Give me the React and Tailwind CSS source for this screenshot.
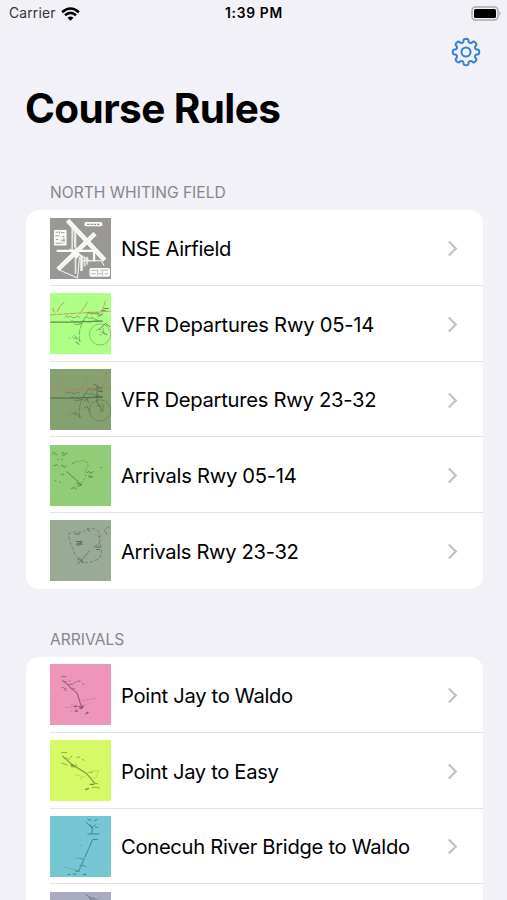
import React from "react";

const sections = [
    {
        title: "North Whiting Field",
        rows: [
            { label: "NSE Airfield", spacing: "tracking-[-0.35px]", art: AirfieldArt },
            { label: "VFR Departures Rwy 05-14", spacing: "tracking-[-0.23px]", art: DepartureGreenArt },
            { label: "VFR Departures Rwy 23-32", spacing: "tracking-[-0.27px]", art: DepartureDarkArt },
            { label: "Arrivals Rwy 05-14", spacing: "tracking-[-0.28px]", art: ArrivalGreenArt },
            { label: "Arrivals Rwy 23-32", spacing: "tracking-[-0.34px]", art: ArrivalGrayArt },
        ],
    },
    {
        title: "Arrivals",
        rows: [
            { label: "Point Jay to Waldo", spacing: "tracking-[-0.3px]", art: WaldoArt },
            { label: "Point Jay to Easy", spacing: "tracking-[-0.34px]", art: EasyArt },
            { label: "Conecuh River Bridge to Waldo", spacing: "tracking-[-0.3px]", art: ConecuhArt },
            { label: "", spacing: "", art: ConecuhEasyArt },
        ],
    },
];

function Thumb({ color, viewBox = "29 22 184 184", children }) {
    return (
        <svg className="w-[61px] h-[61px] shrink-0" viewBox={viewBox} fill="none">
            <rect x="0" y="0" width="300" height="300" fill={color} />
            {children}
        </svg>
    );
}

function AirfieldArt() {
    return (
        <Thumb color="#999895">
            <g stroke="#fafaf8">
                <path d="M53 177 L165 69 M82 29 L194 149" strokeWidth="14" />
                <path d="M49 121 H172 M162 119 V153 M124 134 V182" strokeWidth="7" />
                <path d="M96 50 V137 M106 55 V190" strokeWidth="5" opacity="0.8" />
                <path d="M53 177 L112 203 L118 139 M101 58 L104 110 M127 151 H184 L192 166 M88 115 L152 153" strokeWidth="3" />
                <path d="M133 139 V168 M141 139 V163" strokeWidth="6" opacity="0.7" />
            </g>
            <path d="M57 174 L160 74 M87 36 L190 145" stroke="#e2e1de" strokeWidth="2" />
            <path d="M110 122 L122 131 L109 145 L96 132Z" fill="#fafaf8" />
            <rect x="41" y="58" width="38" height="47" fill="#fafaf8" />
            <path d="M46 65 h8 M62 66 h11 M45 76 h13 M65 78 h7 M47 87 h7 M61 89 h13 M46 98 h20 M58 62 v8 M71 81 v16" stroke="#a19f9c" strokeWidth="3" />
            <rect x="133" y="34" width="54" height="13" rx="5" fill="#fafaf8" />
            <path d="M141 41 h38" stroke="#777572" strokeWidth="3" strokeDasharray="7 3" />
            <rect x="148" y="173" width="62" height="26" rx="5" fill="#fafaf8" />
            <path d="M153 180 h18 M180 179 h24 M153 190 h14 M176 190 h8 M194 190 h10 M173 177 v18 M187 182 v14" stroke="#b5b3b0" strokeWidth="3" />
        </Thumb>
    );
}

function DepartureArt({ color, ink, red, children }) {
    return (
        <Thumb color={color}>
            <path d="M29 88 L110 83 L213 77 M50 79 L60 62 M60 62 l14 -15 M123 80 L143 48 M185 79 L197 45 M139 82 L170 84 M37 67 l5 14" stroke={red} strokeWidth="2.5" strokeDasharray="18 2" />
            <path d="M30 110 H92 L189 107" stroke={ink} strokeWidth="4" />
            <path d="M92 105 l28 8 l8 -8 l17 5 l29 -5 M74 96 l5 -6 l5 6 l7 -5 l5 5 h9 l6 -5 l8 5 M132 98 l8 -4 l8 5 l11 -4 M101 115 l10 3 l16 -5" stroke={ink} strokeWidth="2" />
            <path d="M151 78 C137 91 120 113 117 146 L118 169 M151 86 L172 82 L191 91 M154 97 l30 11" stroke={ink} strokeWidth="2" strokeDasharray="18 3" />
            <circle cx="180" cy="147" r="32" stroke={ink} strokeWidth="2" opacity="0.8" />
            <path d="M86 158 h4 M97 153 l5 7 l5 -4 l7 6 M103 149 l8 13 M116 166 h7 M168 137 l7 -7 l8 5 M177 148 h8 M188 127 l4 17" stroke={ink} strokeWidth="2" />
            {children}
        </Thumb>
    );
}

function DepartureGreenArt() {
    return (
        <DepartureArt color="#aeff85" ink="#62904f" red="#ce8260">
            <path d="M170 80 l6 13 l12 -9 M177 132 l19 -18 l15 10 M184 140 l17 8 M191 69 h15 M183 75 h13 M106 170 l12 7" stroke="#62904f" strokeWidth="3" />
        </DepartureArt>
    );
}

function DepartureDarkArt() {
    return (
        <DepartureArt color="#85a16f" ink="#58714f" red="#ba7961">
            <path d="M171 71 V123 L190 151 M160 67 l9 4 M171 76 l15 4 M174 90 h13 M169 101 l17 5 M132 119 l8 -7 l6 12 M132 141 l7 -7 l11 16" stroke="#4f6848" strokeWidth="2.5" />
        </DepartureArt>
    );
}

function ArrivalGreenArt() {
    return (
        <Thumb color="#91cc76">
            <path d="M79 102 L124 142" stroke="#577f4b" strokeWidth="3" />
            <path d="M36 48 l5 -4 l5 6 l6 2 M64 47 l5 -3 l4 6 l10 -5 M64 52 h11 M39 84 h5 l5 -3 l5 4 M61 87 l5 -5 l4 7 l9 -3 M53 64 v4 M64 62 l4 6 M43 130 h5 M62 113 l5 -4 l3 5 M57 132 l6 5 M92 153 l11 -2 l6 4 M95 76 l8 1" stroke="#5d834e" strokeWidth="2.5" />
            <path d="M106 73 L128 69 L143 75 L144 86 L135 97 L137 112 L134 124 L118 146 L100 149" stroke="#618854" strokeWidth="2" strokeDasharray="7 4" />
            <path d="M108 137 l16 5 l-9 4 M141 105 l6 -3 l5 5 l8 -5 M144 118 h15 M147 112 l7 9 M181 90 h4" stroke="#5c824e" strokeWidth="3" />
        </Thumb>
    );
}

function ArrivalGrayArt() {
    return (
        <Thumb color="#9aab95">
            <path d="M87 82 L85 63 L105 57 L127 60 L140 48 L155 46 L171 52 L181 68 L178 82 L183 107 L184 124 L176 140 L157 148 L139 151 L119 143 L105 128 L98 109Z" stroke="#697d68" strokeWidth="2.5" strokeDasharray="10 6" />
            <path d="M123 146 l25 -31 M163 105 l17 -14 M172 69 l9 7 M197 48 l11 -6 M192 51 l10 17" stroke="#617460" strokeWidth="2.5" />
            <path d="M106 87 h20 l-17 8 h20 M112 101 l15 -14 M112 143 l7 -5 l6 11 h6 M112 153 l8 -5 M163 100 l9 5 l9 -3 M168 111 h12 M141 51 l9 4 M104 64 h15" stroke="#5a7059" strokeWidth="3" />
        </Thumb>
    );
}

function WaldoArt() {
    return (
        <Thumb color="#ed96b9" viewBox="29 27 184 184">
            <path d="M66 75 L103 109 L111 115 L124 157" stroke="#804f70" strokeWidth="3" />
            <path d="M62 65 h16 M66 80 h13 M83 88 h16 M91 102 h14 M101 84 l7 -4 M111 79 h10 M126 87 l6 2 M64 97 l15 5 M72 105 l7 3 M86 80 l4 -5" stroke="#9c6184" strokeWidth="3" />
            <path d="M124 138 L170 130 M74 158 l28 -2 l36 -6 M91 149 l26 7 M102 162 h18 M88 169 h24" stroke="#c37599" strokeWidth="2" strokeDasharray="9 3" />
            <path d="M117 155 l7 6 l6 -8 M136 178 l9 -6 M101 155 h10 M105 169 h8" stroke="#834f6a" strokeWidth="4" />
        </Thumb>
    );
}

function EasyArt() {
    return (
        <Thumb color="#d5fa65" viewBox="29 27 184 184">
            <path d="M66 75 L94 100 L139 128 L166 160" stroke="#81983f" strokeWidth="3.5" />
            <path d="M63 65 h17 M82 81 l6 5 M72 82 h8 M90 80 l6 -5 M110 79 h9 M126 85 l6 4 M64 96 l18 7 M92 107 l12 2 M105 99 l6 8 M146 125 l12 -2 M161 157 l13 2 M155 171 l10 -2 l14 3" stroke="#91a946" strokeWidth="3" />
            <path d="M139 128 l25 -9 h12 l-9 23 M136 135 l-17 10 M151 139 l15 4 M105 132 l21 5" stroke="#c0c256" strokeWidth="2" />
            <path d="M135 177 l11 -4 M149 161 h13 M91 102 l13 3" stroke="#738b39" strokeWidth="4" />
        </Thumb>
    );
}

function ConecuhArt() {
    return (
        <Thumb color="#75c8d3" viewBox="29 31 184 184">
            <path d="M158 101 L123 181 L116 195" stroke="#3f8190" strokeWidth="3" strokeDasharray="28 2" />
            <path d="M137 49 l20 19 l-2 18 M154 68 l13 -11 M150 56 l6 11 M142 85 h36 M158 102 h15 M142 43 h12 M161 46 l11 -5 M165 65 h9 M117 158 l11 3 M118 181 h16 l4 5" stroke="#458694" strokeWidth="3" />
            <path d="M101 157 l24 3 M72 185 l42 11 M119 120 h6" stroke="#679eaa" strokeWidth="2" />
            <path d="M105 197 h14 M82 207 h8 M98 206 h10 M128 207 h10" stroke="#3d7684" strokeWidth="3" />
        </Thumb>
    );
}

function ConecuhEasyArt() {
    return (
        <Thumb color="#a9abc0" viewBox="29 31 184 184">
            <path d="M137 39 l12 7 l5 12 M145 49 h18 M160 48 l9 9 M150 55 h24" stroke="#777c91" strokeWidth="3" />
        </Thumb>
    );
}

function WifiIcon() {
    return (
        <svg className="w-[19px] h-[14px]" viewBox="0 0 19 14" fill="none" stroke="black" strokeWidth="2.5">
            <path d="M1.1 5.2 Q9.5 -2.2 17.9 5.2" />
            <path d="M4 8.3 Q9.5 3.5 15 8.3" />
            <path d="M6.5 10.7 Q9.5 8.2 12.5 10.7 L9.5 13.7Z" fill="black" stroke="none" />
        </svg>
    );
}

function BatteryIcon() {
    return (
        <svg className="w-[31px] h-[16px]" viewBox="0 0 31 16" fill="none">
            <rect x="1" y="1" width="26" height="13" rx="3.5" stroke="#aaa9ad" strokeWidth="1.4" />
            <rect x="3" y="3" width="22" height="9" rx="1.5" fill="black" />
            <path d="M28.3 5 Q31 7.5 28.3 10Z" fill="#aaa9ad" />
        </svg>
    );
}

function GearIcon() {
    // one tooth, repeated around the hub
    const tooth = [
        [-22.5, 9.9], [-17, 10.1], [-13.5, 10.9], [-11.5, 12.2], [-8.5, 13], [0, 13.3], [8.5, 13], [11.5, 12.2], [13.5, 10.9], [17, 10.1],
    ];
    const points = [];
    for (let i = 0; i < 8; i++) {
        tooth.forEach(([deg, r]) => {
            const angle = ((deg + i * 45) * Math.PI) / 180;
            points.push(`${(r * Math.sin(angle)).toFixed(2)},${(-r * Math.cos(angle)).toFixed(2)}`);
        });
    }
    return (
        <svg className="w-[30px] h-[30px]" viewBox="-15 -15 30 30" fill="none" stroke="#3384d8" strokeWidth="2" strokeLinejoin="round">
            <polygon points={points.join(" ")} />
            <circle r="4.5" />
        </svg>
    );
}

function RuleRow({ row }) {
    const Art = row.art;
    return (
        <div className="flex h-[75.7px] pl-[24.5px]">
            <div className="flex items-center">
                <Art />
            </div>
            <div className={`ml-[10px] flex flex-1 items-center justify-between pt-px pr-[25px] ${row.spacing}`}>
                <span className="pt-px whitespace-nowrap">{row.label}</span>
                <svg className="w-[11px] h-[17px]" viewBox="0 0 11 17" fill="none" stroke="#c2c2c5" strokeWidth="2.2">
                    <path d="M1.8 1.5 L8.8 8.5 L1.8 15.5" />
                </svg>
            </div>
        </div>
    );
}

function App() {
    return (
        <div className="h-[900px] w-[507px] overflow-hidden bg-[#f2f1f7] text-black font-['Inter',sans-serif]">
            <div className="grid h-[27px] grid-cols-3 items-center pl-[9px] pr-[5px]">
                <div className="flex items-center gap-[5px] text-[13.8px] tracking-[0.2px] text-[#333335]">
                    <span>Carrier</span>
                    <WifiIcon />
                </div>
                <div className="-ml-[3px] text-center text-[13.8px] font-semibold tracking-[0.7px]">1:39 PM</div>
                <div className="flex justify-end">
                    <BatteryIcon />
                </div>
            </div>

            <div className="flex h-[50px] items-center justify-end pr-[26px]">
                <GearIcon />
            </div>

            <h1 className="ml-[25px] h-[63px] text-[40.5px] leading-[64px] font-bold tracking-[-0.6px]">Course Rules</h1>

            <div className="pt-[39.3px]">
                {sections.map((section) => (
                    <section key={section.title} className="mb-[37.4px]">
                        <h2 className="ml-[50px] h-[31px] text-[15.6px] leading-[28px] text-[#86868b] uppercase">{section.title}</h2>
                        <div className="ml-[25.5px] mr-[24px] overflow-hidden rounded-[13px] bg-white text-[20.2px]">
                            {section.rows.map((row, index) => (
                                <div key={row.label}>
                                    {index > 0 && <div className="ml-[24.5px] -mt-px h-px bg-[#e2e2e5]" />}
                                    <RuleRow row={row} />
                                </div>
                            ))}
                        </div>
                    </section>
                ))}
            </div>
        </div>
    );
}

export default App;
